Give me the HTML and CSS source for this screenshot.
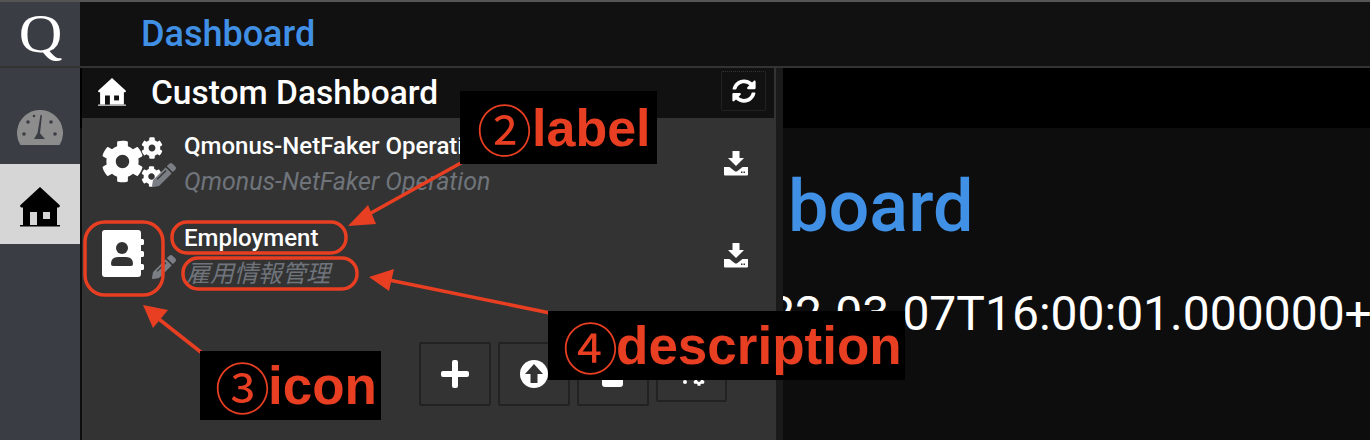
FILE: index.html
```html
<!DOCTYPE html>
<html>
  <head>
    <title>Custom Dashboard</title>
    <link rel="stylesheet" href="styles.css">
  </head>
  <body>
    <svg class="defs" width="0" height="0">
      <symbol id="i-cog" viewBox="0 0 512 512"><path d="M487.4 315.7l-42.6-24.6c4.3-23.2 4.3-47 0-70.2l42.6-24.6c4.9-2.8 7.1-8.6 5.5-14-11.1-35.6-30-67.8-54.7-94.6-3.8-4.1-10-5.1-14.8-2.3L380.8 110c-17.9-15.4-38.5-27.3-60.8-35.1V25.8c0-5.6-3.9-10.5-9.4-11.7-36.7-8.2-74.3-7.8-109.2 0-5.5 1.2-9.4 6.1-9.4 11.7V75c-22.2 7.9-42.8 19.8-60.8 35.1L88.7 85.5c-4.9-2.8-11-1.9-14.8 2.3-24.7 26.7-43.6 58.9-54.7 94.6-1.7 5.4.6 11.2 5.5 14L67.3 221c-4.3 23.2-4.3 47 0 70.2l-42.6 24.6c-4.9 2.8-7.1 8.6-5.5 14 11.1 35.6 30 67.8 54.7 94.6 3.8 4.1 10 5.1 14.8 2.3l42.6-24.6c17.9 15.4 38.5 27.3 60.8 35.1v49.2c0 5.6 3.9 10.5 9.4 11.7 36.7 8.2 74.3 7.8 109.2 0 5.5-1.2 9.4-6.1 9.4-11.7v-49.2c22.2-7.9 42.8-19.8 60.8-35.1l42.6 24.6c4.9 2.8 11 1.9 14.8-2.3 24.7-26.7 43.6-58.9 54.7-94.6 1.5-5.5-.7-11.3-5.6-14.1zM256 336c-44.1 0-80-35.9-80-80s35.9-80 80-80 80 35.9 80 80-35.9 80-80 80z"/></symbol>
      <symbol id="i-pencil" viewBox="0 0 512 512"><path d="M497.9 142.1l-46.1 46.1c-4.7 4.7-12.3 4.7-17 0l-111-111c-4.7-4.7-4.7-12.3 0-17l46.1-46.1c18.7-18.7 49.1-18.7 67.9 0l60.1 60.1c18.8 18.7 18.8 49.1 0 67.9zM284.2 99.8L21.6 362.4.4 483.9c-2.9 16.4 11.4 30.6 27.8 27.8l121.5-21.3 262.6-262.6c4.7-4.7 4.7-12.3 0-17l-111-111c-4.8-4.700-12.4-4.700-17.100 0z"/><path d="M110 350L300 160" stroke="#333" stroke-width="28" fill="none"/></symbol>
      <symbol id="i-download" viewBox="0 0 24 25"><path d="M8.500 0h7v7h4.500L12 15 4 7h4.500zM0 16h5.500l5 4q1.500 1 3 0l5-4H24v7.500q0 1-1 1H1q-1 0-1-1z"/><rect x="17" y="20.500" width="1.500" height="1.500" fill="#333"/><rect x="19.500" y="20.500" width="1.500" height="1.500" fill="#333"/></symbol>
      <symbol id="i-home" viewBox="0 0 40 40"><path d="M20 0l19.500 18q1 2-1 2.500H37V38H3V20.500H1.500q-2-.500-1-2.500z"/><rect y="38" width="40" height="1.500"/></symbol>
    </svg>

    <div class="topline"></div>
    <header class="topbar">
      <div class="logo"><span>Q</span></div>
      <div class="page-name">Dashboard</div>
    </header>

    <div class="layout">
      <nav class="sidebar">
        <a class="nav-item nav-gauge">
          <svg width="46" height="36" viewBox="0 0 46 36">
            <path d="M3.400 35A23 23 0 1 1 42.600 35z" fill="#8c8c8c"/>
            <g fill="#3a3d44">
              <circle cx="11" cy="12" r="1.800"/><circle cx="34" cy="12" r="1.800"/>
              <circle cx="7" cy="24" r="1.800"/><circle cx="38" cy="24" r="1.800"/>
              <circle cx="17" cy="6" r="1.300"/>
              <path d="M23.500 5l1.500.300-2 18 5 5.700H17l3.500-6z"/>
            </g>
          </svg>
        </a>
        <a class="nav-item nav-active">
          <svg width="40" height="40" viewBox="0 0 40 40" class="home-dark">
            <use href="#i-home"/>
            <rect x="10" y="25" width="7" height="13" fill="#d6d6d6"/>
            <rect x="23" y="25" width="7" height="7" fill="#d6d6d6"/>
          </svg>
        </a>
      </nav>

      <main class="content">
        <div class="content-bar"></div>
        <h1 class="big-title">board</h1>
        <p class="timestamp">2022-03-07T16:00:01.000000+</p>
      </main>

      <section class="panel">
        <div class="panel-head">
          <svg class="panel-home" width="28" height="28" viewBox="0 0 40 40">
            <use href="#i-home"/>
            <rect x="10" y="25" width="7" height="13" fill="#111"/>
            <rect x="23" y="25" width="7" height="7" fill="#111"/>
          </svg>
          <h2>Custom Dashboard</h2>
          <button class="refresh">
            <svg width="24" height="24" viewBox="0 0 512 512"><path d="M370.720 133.280C339.458 104.008 298.888 87.962 255.848 88c-77.458.068-144.328 53.178-162.791 126.850-1.344 5.363-6.122 9.150-11.651 9.150H24.103c-7.498 0-13.194-6.807-11.807-14.176C33.933 94.924 134.813 8 256 8c66.448 0 126.791 26.136 171.315 68.685L463.030 40.970C478.149 25.851 504 36.559 504 57.941V192c0 13.255-10.745 24-24 24H345.941c-21.382 0-32.090-25.851-16.971-40.971l41.750-41.749zM32 296h134.059c21.382 0 32.090 25.851 16.971 40.971l-41.750 41.750c31.262 29.273 71.835 45.319 114.876 45.280 77.418-.070 144.315-53.144 162.787-126.849 1.344-5.363 6.122-9.150 11.651-9.150h57.304c7.498 0 13.194 6.807 11.807 14.176C478.067 417.076 377.187 504 256 504c-66.448 0-126.791-26.136-171.315-68.685L48.970 471.030C33.851 486.149 8 475.441 8 454.059V320c0-13.255 10.745-24 24-24z"/></svg>
          </button>
        </div>

        <div class="row">
          <div class="row-icon">
            <svg class="cog-big" width="43" height="43"><use href="#i-cog"/></svg>
            <svg class="cog-small cog-top" width="22" height="22"><use href="#i-cog"/></svg>
            <svg class="cog-small cog-bottom" width="21" height="21"><use href="#i-cog"/></svg>
            <svg class="pencil" width="24" height="24"><use href="#i-pencil"/></svg>
          </div>
          <div class="row-text">
            <div class="row-label">Qmonus-NetFaker Operation</div>
            <div class="row-desc">Qmonus-NetFaker Operation</div>
          </div>
          <svg class="download" width="24" height="25"><use href="#i-download"/></svg>
        </div>

        <div class="row">
          <div class="row-icon">
            <svg class="book" width="42" height="48" viewBox="0 0 42 48">
              <path d="M3 0h33q3 0 3 3v6h1.500q1.500 0 1.500 1.500v3q0 1.500-1.500 1.500H39v6h1.500q1.500 0 1.500 1.500v3q0 1.500-1.500 1.500H39v7h1.500q1.500 0 1.500 1.500v3q0 1.500-1.500 1.500H39v4q0 3-3 3H3q-3 0-3-3V3q0-3 3-3z" fill="#fff"/>
              <circle cx="20" cy="18" r="6" fill="#333"/>
              <path d="M9 34q0-7 7-7h8q7 0 7 7 0 2-2 2H11q-2 0-2-2z" fill="#333"/>
            </svg>
            <svg class="pencil" width="24" height="24"><use href="#i-pencil"/></svg>
          </div>
          <div class="row-text">
            <div class="row-label">Employment</div>
            <div class="row-desc row-desc-ja">雇用情報管理</div>
          </div>
          <svg class="download" width="24" height="25"><use href="#i-download"/></svg>
        </div>

        <div class="panel-actions">
          <button class="action">
            <svg width="30" height="30" viewBox="0 0 30 30"><path d="M12 3q0-2 2-2h2q2 0 2 2v9h9q2 0 2 2v2q0 2-2 2h-9v9q0 2-2 2h-2q-2 0-2-2v-9H3q-2 0-2-2v-2q0-2 2-2h9z"/></svg>
          </button>
          <button class="action">
            <svg width="30" height="30" viewBox="0 0 30 30"><circle cx="15" cy="15" r="14"/><path d="M15 5l9 10h-5.500v9h-7v-9H6z" fill="#333"/></svg>
          </button>
          <button class="action">
            <svg width="30" height="30" viewBox="0 0 30 30"><rect x="4" y="5" width="21" height="23" rx="3"/></svg>
          </button>
          <button class="action action-short">
            <svg width="30" height="30" viewBox="0 0 30 30"><circle cx="8" cy="25" r="2"/><use href="#i-cog" x="16" y="17" width="12" height="12"/></svg>
          </button>
        </div>
      </section>
    </div>

    <!-- annotations on top of the screenshot -->
    <svg class="marks" width="1370" height="440">
      <g fill="none" stroke="#e83e22" stroke-width="3.500">
        <rect x="85" y="222" width="78" height="73" rx="20"/>
        <rect x="172" y="222" width="174" height="31" rx="15"/>
        <rect x="183" y="258" width="174" height="31" rx="15"/>
        <path d="M468 159L362 218"/>
        <path d="M550 313L384 279"/>
        <path d="M202 353L155 316"/>
      </g>
      <g fill="#e83e22">
        <path d="M348 226L368 205L376 224z"/>
        <path d="M369 277L394 269L389 291z"/>
        <path d="M143 305L168 310L153 328z"/>
      </g>
    </svg>
    <div class="note note-label"><span class="num">②</span>label</div>
    <div class="note note-desc"><span class="num">④</span>description</div>
    <div class="note note-icon"><span class="num">③</span>icon</div>
  </body>
</html>
```

FILE: styles.css
```css
* {
  box-sizing: border-box;
}

html,
body {
  height: 100%;
}

body {
  margin: 0;
  position: relative;
  display: flex;
  flex-direction: column;
  overflow: hidden;
  background: #0d0d0d;
  color: #fff;
  font-family: Roboto, "Noto Sans CJK JP", sans-serif;
}

h1,
h2,
p {
  margin: 0;
  font-weight: 400;
}

.defs {
  position: absolute;
}

.topline {
  height: 2px;
  background: #555;
}

.topbar {
  display: flex;
  height: 66px;
  background: #111;
  border-bottom: 2px solid #333;
}

.logo {
  width: 80px;
  background: #3a3d44;
  display: flex;
  justify-content: center;
  align-items: center;
  font-family: "Liberation Serif", serif;
  font-size: 54px;
  line-height: 1;
}

.logo span {
  display: inline-block;
  transform: scaleX(1.12);
}

.page-name {
  margin-left: 61px;
  font-size: 36px;
  font-weight: 500;
  line-height: 64px;
  color: #4090e6;
}

.layout {
  flex: 1;
  display: flex;
  position: relative;
}

.sidebar {
  width: 80px;
  flex: none;
  background: #3a3d44;
}

.nav-item {
  display: flex;
  justify-content: center;
  align-items: center;
}

.nav-gauge {
  height: 96px;
  padding-top: 24px;
}

.nav-active {
  height: 80px;
  background: #d6d6d6;
  padding-top: 6px;
}

.home-dark {
  fill: #000;
}

.content {
  flex: 1;
  min-width: 0;
  overflow: hidden;
  background: #0d0d0d;
}

.content-bar {
  height: 60px;
  background: #000;
}

.big-title {
  margin-top: 37px;
  margin-left: 708px;
  font-size: 72px;
  font-weight: 500;
  line-height: 84px;
  color: #4090e6;
  white-space: nowrap;
}

.timestamp {
  margin-top: 41px;
  margin-left: 634px;
  font-size: 48px;
  line-height: 48px;
  white-space: nowrap;
}

/* panel lies over the page content */
.panel {
  position: absolute;
  top: 0;
  bottom: 0;
  left: 82px;
  width: 701px;
  background: #333;
  border-right: 7px solid #1a1a1a;
}

.panel-head {
  height: 50px;
  margin-right: 2px;
  background: #111;
  display: flex;
  align-items: center;
  padding-left: 16px;
}

.panel-home {
  fill: #fff;
  margin-top: -2px;
}

.panel-head h2 {
  flex: 1;
  margin-left: 25px;
  font-size: 33.500px;
  font-weight: 500;
  line-height: 50px;
}

.refresh {
  width: 45px;
  height: 40px;
  margin-right: 8px;
  margin-top: -4px;
  padding: 0;
  display: flex;
  justify-content: center;
  align-items: center;
  background: #111;
  border: 1px dotted #333;
  border-radius: 2px;
  fill: #fff;
}

.row {
  height: 92px;
  display: flex;
  position: relative;
}

.row-icon {
  width: 102px;
  position: relative;
  flex: none;
  fill: #fff;
}

.cog-big {
  position: absolute;
  left: 19px;
  top: 22px;
}

.cog-small {
  position: absolute;
}

.cog-top {
  top: 19px;
  left: 59px;
}

.cog-bottom {
  top: 48px;
  left: 59px;
}

.book {
  position: absolute;
  left: 20px;
  top: 20px;
}

.pencil {
  position: absolute;
  left: 70px;
  top: 45px;
  fill: #7b7f85;
}

.row-text {
  padding-top: 14px;
}

.row-label {
  font-size: 24px;
  font-weight: 500;
  line-height: 28px;
  white-space: nowrap;
}

.row-desc {
  margin-top: 5px;
  font-size: 25px;
  font-style: italic;
  line-height: 34px;
  color: #6f747b;
  white-space: nowrap;
}

.row-desc-ja {
  font-size: 24px;
  padding-left: 2px;
}

.download {
  position: absolute;
  left: 642px;
  top: 33px;
  fill: #fff;
}

.panel-actions {
  display: flex;
  justify-content: flex-end;
  align-items: flex-start;
  gap: 7px;
  margin-top: 40px;
  padding-right: 49px;
}

.action {
  width: 72px;
  height: 64px;
  padding: 0;
  display: flex;
  justify-content: center;
  align-items: center;
  background: #333;
  border: 2px solid #222;
  border-radius: 2px;
  fill: #fff;
}

.action-short {
  width: 71px;
  height: 60px;
}

/* annotations */
.marks {
  position: absolute;
  left: 0;
  top: 0;
}

.note {
  position: absolute;
  background: #000;
  color: #e83e22;
  font-family: "Liberation Sans", Arial, sans-serif;
  font-weight: 700;
  font-size: 53px;
  white-space: nowrap;
  display: flex;
  align-items: center;
}

.num {
  font-family: "Noto Sans CJK JP", sans-serif;
  font-weight: 400;
  font-size: 55px;
  line-height: 1;
  margin-right: -2px;
}

.note-label {
  left: 460px;
  top: 91px;
  width: 197px;
  height: 73px;
  padding-left: 17px;
  font-size: 52px;
}

.note-label .num {
  margin-right: 0;
}

.note-desc {
  left: 548px;
  top: 311px;
  width: 357px;
  height: 69px;
  padding-left: 15px;
}

.note-icon {
  left: 200px;
  top: 351px;
  width: 181px;
  height: 69px;
  padding-left: 15px;
}
```
